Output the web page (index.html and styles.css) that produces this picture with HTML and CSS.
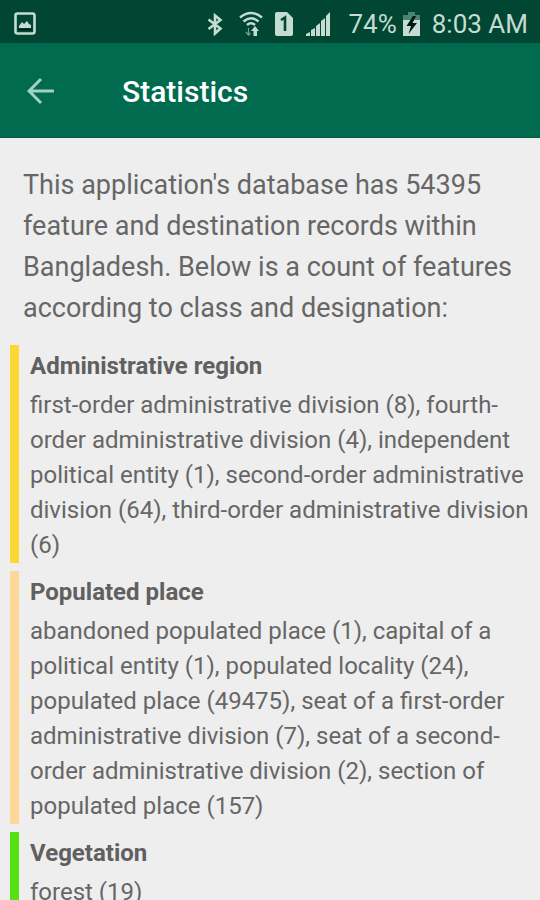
FILE: index.html
```html
<!DOCTYPE html>
<html lang="en">
<head>
  <meta charset="UTF-8">
  <meta name="viewport" content="width=device-width, initial-scale=1">
  <title>Statistics</title>
  <link rel="stylesheet" href="styles.css">
</head>
<body>

  <div class="status-bar">
    <svg class="picture" width="22" height="24" viewBox="0 0 22 24">
      <rect x="1.5" y="1.5" width="19" height="20" rx="2" fill="none" stroke="currentColor" stroke-width="2.6"/>
      <path d="M5 16v-2l3-4 2 2 3-3 2 3 2 1v3z" fill="currentColor"/>
      <path d="M4 17.500h14" stroke="#00180f" stroke-width="1.5"/>
    </svg>
    <div class="status-icons">
      <svg width="16" height="24" viewBox="0 0 16 24">
        <path d="M1.500 7.500l12 9L8 21.500V3.500l5.500 4.500L1.500 17" fill="none" stroke="currentColor" stroke-width="2.600"/>
      </svg>
      <svg class="wifi" width="24" height="26" viewBox="0 0 24 26">
        <g fill="none" stroke="currentColor" stroke-width="2.400">
          <path d="M1 6.500Q12-2.500 23 6.500"/>
          <path d="M4.500 10.500Q12 4 19.500 10.500"/>
          <path d="M8 14Q12 10.500 16 14"/>
        </g>
        <path d="M14.500 25v-5h-2.500l4-5 4 5H18v5z" fill="currentColor"/>
        <path d="M9.500 17v7M7 21l2.500 3 2-2" fill="none" stroke="currentColor" stroke-width="1.200" opacity=".6"/>
      </svg>
      <svg class="sim" width="18" height="24" viewBox="0 0 18 24">
        <path d="M2 0h10l6 6v16q0 2-2 2H2q-2 0-2-2V2q0-2 2-2z" fill="currentColor"/>
        <path d="M6 8l4-2.500V19" fill="none" stroke="#004633" stroke-width="2.600"/>
      </svg>
      <svg class="signal" width="24" height="24" viewBox="0 0 24 24">
        <path d="M0 24v-2l4-2v4zM5 24v-6l4-2v8zM10 24V14l4-3v13zM15 24V9l4-3v18zM20 24V4l4-4v24z" fill="currentColor"/>
      </svg>
      <span class="percent">74%</span>
      <svg class="battery" width="17" height="24" viewBox="0 0 17 24">
        <path d="M5 0h7v3h5v5H0V3h5z" fill="currentColor" opacity=".4"/>
        <path d="M0 8h17v16H0z" fill="currentColor"/>
        <path d="M10 4L3.500 14H8l-2.500 8L14 11H9.500L13 4z" fill="#00180f"/>
      </svg>
      <span>8:03 AM</span>
    </div>
  </div>

  <header class="toolbar">
    <button class="back" type="button" aria-label="Back">
      <svg width="28" height="28" viewBox="0 0 28 28">
        <path d="M27 14H2M14 2L2 14l12 12" fill="none" stroke="currentColor" stroke-width="3"/>
      </svg>
    </button>
    <h1>Statistics</h1>
  </header>

  <main>
    <p class="intro">This application's database has 54395 feature and destination records within Bangladesh. Below is a count of features according to class and designation:</p>

    <section class="feature admin">
      <h2>Administrative region</h2>
      <p>first-order administrative division (8), fourth-order administrative division (4), independent political entity (1), second-order administrative division (64), third-order administrative division (6)</p>
    </section>

    <section class="feature populated">
      <h2>Populated place</h2>
      <p>abandoned populated place (1), capital of a political entity (1), populated locality (24), populated place (49475), seat of a first-order administrative division (7), seat of a second-order administrative division (2), section of populated place (157)</p>
    </section>

    <section class="feature vegetation">
      <h2>Vegetation</h2>
      <p>forest (19)</p>
    </section>
  </main>

</body>
</html>
```
FILE: styles.css
```css
* {
  box-sizing: border-box;
}

body {
  margin: 0;
  height: 100vh;
  display: flex;
  flex-direction: column;
  background-color: #eeeeee;
  color: #666666;
  font-family: Roboto, "Liberation Sans", sans-serif;
}

h1, h2, p {
  margin: 0;
}

svg {
  display: block;
}

.status-bar {
  display: flex;
  justify-content: space-between;
  align-items: center;
  flex-shrink: 0;
  height: 43px;
  padding: 4px 12px 0 14px;
  background-color: #004633;
  color: #c4dcd2;
  font-size: 26px;
}

.status-icons {
  display: flex;
  align-items: center;
}

.wifi {
  margin-left: 16px;
}

.sim {
  margin-left: 12px;
}

.signal {
  margin-left: 13px;
}

.percent {
  margin-left: 18px;
}

.battery {
  margin: 0 12px 0 6px;
}

.toolbar {
  display: flex;
  align-items: center;
  flex-shrink: 0;
  height: 95px;
  padding: 2px 27px 0;
  background-color: #006b4f;
  border-bottom: 1px solid #005a42;
}

.back {
  padding: 0;
  border: none;
  background: none;
  color: #a6d0c2;
  cursor: pointer;
}

.toolbar h1 {
  margin-left: 67px;
  color: white;
  font-size: 30px;
  font-weight: 500;
}

main {
  flex: 1;
  min-height: 0;
  overflow-y: auto;
  scrollbar-width: none;
  padding: 27px 10px 0;
}

.intro {
  padding: 0 13px;
  margin-bottom: 16px;
  font-size: 27px;
  line-height: 41px;
}

.feature {
  margin-bottom: 8px;
  padding: 4px 0 0 11px;
  border-left: 9px solid;
}

.feature h2 {
  color: #606060;
  font-size: 24px;
  font-weight: bold;
  line-height: 35px;
  padding-bottom: 4px;
}

.feature p {
  font-size: 24px;
  line-height: 35px;
}

.feature h2, .feature p {
  margin-right: -4px;
}

.admin {
  border-color: #fdd835;
}

.populated {
  border-color: #ffd899;
}

.vegetation {
  border-color: #55e012;
}
```
